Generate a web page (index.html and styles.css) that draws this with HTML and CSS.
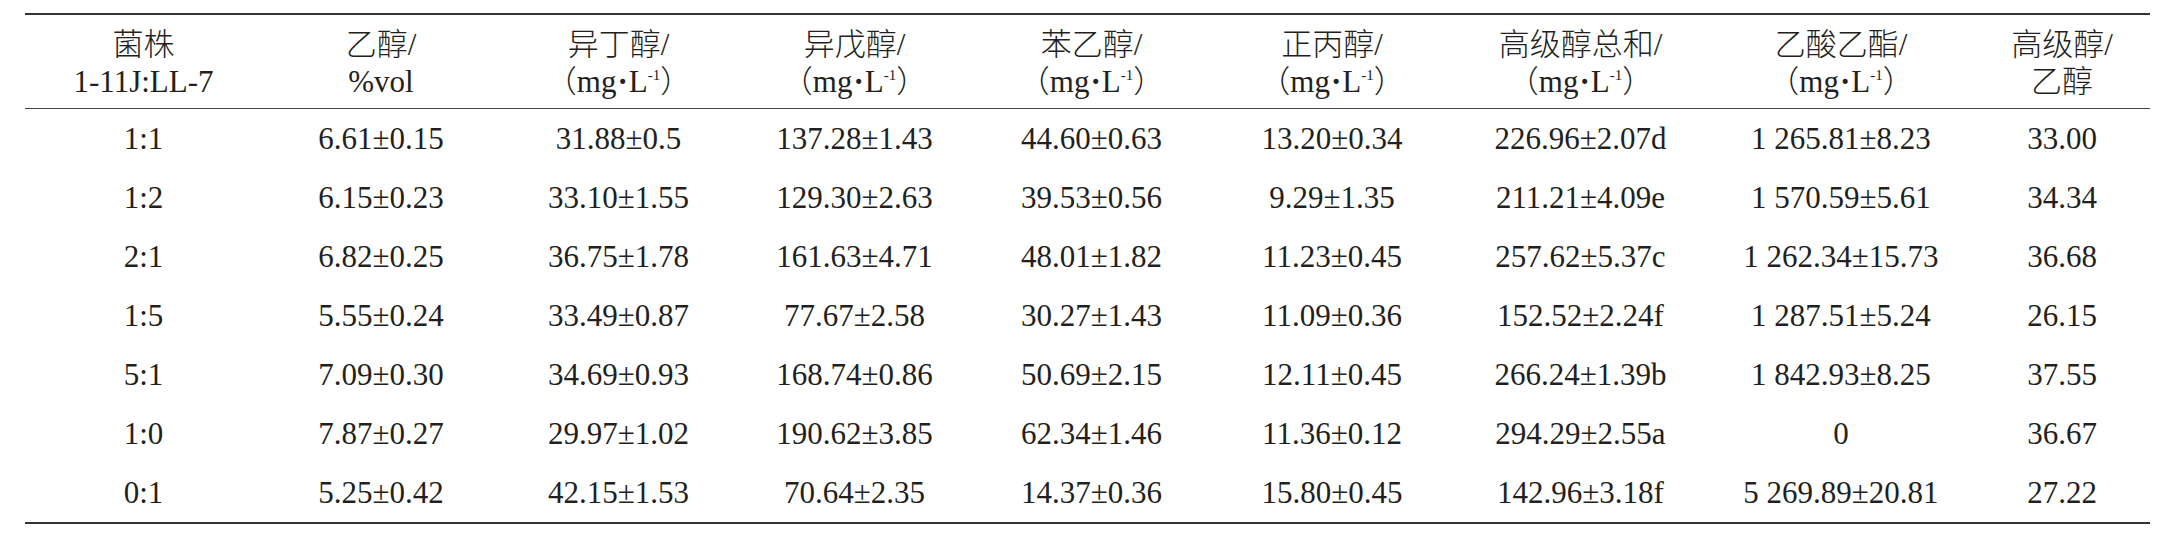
FILE: index.html
```html
<!DOCTYPE html>
<html lang="zh">
<head>
<meta charset="utf-8">
<title>菌株混合比例对高级醇的影响</title>
<link rel="stylesheet" href="styles.css">
</head>
<body>
<div class="page">
<table class="data">
<colgroup>
<col class="c1"><col class="c2"><col class="c3"><col class="c4"><col class="c5"><col class="c6"><col class="c7"><col class="c8"><col class="c9">
</colgroup>
<thead>
<tr>
<th>菌株<br>1-11J:LL-7</th>
<th>乙醇/<br>%vol</th>
<th>异丁醇/<br>（mg<b class="dot">·</b>L<sup>-1</sup>）</th>
<th>异戊醇/<br>（mg<b class="dot">·</b>L<sup>-1</sup>）</th>
<th>苯乙醇/<br>（mg<b class="dot">·</b>L<sup>-1</sup>）</th>
<th>正丙醇/<br>（mg<b class="dot">·</b>L<sup>-1</sup>）</th>
<th>高级醇总和/<br>（mg<b class="dot">·</b>L<sup>-1</sup>）</th>
<th>乙酸乙酯/<br>（mg<b class="dot">·</b>L<sup>-1</sup>）</th>
<th>高级醇/<br>乙醇</th>
</tr>
</thead>
<tbody>
<tr><td>1:1</td><td>6.61±0.15</td><td>31.88±0.5</td><td>137.28±1.43</td><td>44.60±0.63</td><td>13.20±0.34</td><td>226.96±2.07d</td><td>1 265.81±8.23</td><td>33.00</td></tr>
<tr><td>1:2</td><td>6.15±0.23</td><td>33.10±1.55</td><td>129.30±2.63</td><td>39.53±0.56</td><td>9.29±1.35</td><td>211.21±4.09e</td><td>1 570.59±5.61</td><td>34.34</td></tr>
<tr><td>2:1</td><td>6.82±0.25</td><td>36.75±1.78</td><td>161.63±4.71</td><td>48.01±1.82</td><td>11.23±0.45</td><td>257.62±5.37c</td><td>1 262.34±15.73</td><td>36.68</td></tr>
<tr><td>1:5</td><td>5.55±0.24</td><td>33.49±0.87</td><td>77.67±2.58</td><td>30.27±1.43</td><td>11.09±0.36</td><td>152.52±2.24f</td><td>1 287.51±5.24</td><td>26.15</td></tr>
<tr><td>5:1</td><td>7.09±0.30</td><td>34.69±0.93</td><td>168.74±0.86</td><td>50.69±2.15</td><td>12.11±0.45</td><td>266.24±1.39b</td><td>1 842.93±8.25</td><td>37.55</td></tr>
<tr><td>1:0</td><td>7.87±0.27</td><td>29.97±1.02</td><td>190.62±3.85</td><td>62.34±1.46</td><td>11.36±0.12</td><td>294.29±2.55a</td><td>0</td><td>36.67</td></tr>
<tr class="last"><td>0:1</td><td>5.25±0.42</td><td>42.15±1.53</td><td>70.64±2.35</td><td>14.37±0.36</td><td>15.80±0.45</td><td>142.96±3.18f</td><td>5 269.89±20.81</td><td>27.22</td></tr>
</tbody>
</table>
</div>
</body>
</html>
```
FILE: styles.css
```css
html, body {
  margin: 0;
  padding: 0;
  background: #ffffff;
}

.page {
  padding: 13px 0 0 25px;
}

.data {
  width: 2125px;
  table-layout: fixed;
  border-collapse: separate;
  border-spacing: 0;
  font-family: "Liberation Serif", "Noto Sans CJK SC", serif;
  font-size: 31px;
  color: #231f20;
}

.c1 { width: 237px; }
.c2 { width: 238px; }
.c3 { width: 237px; }
.c4 { width: 235px; }
.c5 { width: 239px; }
.c6 { width: 242px; }
.c7 { width: 255px; }
.c8 { width: 266px; }
.c9 { width: 176px; }

.data th {
  font-weight: 300;
  line-height: 37px;
  padding: 11px 0 8px;
  border-top: 2px solid #333333;
  border-bottom: 1px solid #444444;
  text-align: center;
  vertical-align: middle;
}

.data th .dot {
  font-weight: bold;
  padding: 0 1px;
}

.data th sup {
  font-size: 15px;
  line-height: 0;
  vertical-align: 12px;
  letter-spacing: 0;
}

.data td {
  height: 59px;
  padding: 0;
  line-height: 34px;
  text-align: center;
  vertical-align: middle;
}

.data tr.last td {
  height: 59px;
  border-bottom: 2px solid #333333;
}
```
